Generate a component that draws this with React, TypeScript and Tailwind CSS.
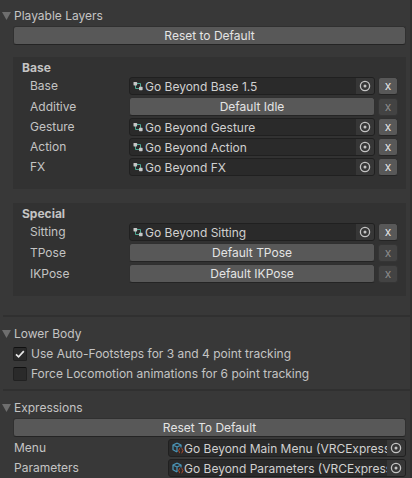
import { useState, type ReactNode } from "react";

function PickerIcon() {
  return (
    <svg viewBox="0 0 12 12" className="size-3" aria-hidden="true">
      <circle cx="6" cy="6" r="4.6" fill="none" stroke="#c4c4c4" strokeWidth="1.3" />
      <circle cx="6" cy="6" r="1.5" fill="#c4c4c4" />
    </svg>
  );
}

function ControllerIcon() {
  return (
    <svg viewBox="0 0 10 10" className="mr-0.5 size-2.5 shrink-0" aria-hidden="true">
      <path d="M4 2.500H7.500V6M2.500 4V7.500H6" fill="none" stroke="#4da893" strokeWidth="1" />
      <rect x="0.5" y="1" width="3.6" height="3.4" rx="0.6" fill="#c8c8c8" />
      <rect x="6" y="5.8" width="3.6" height="3.4" rx="0.6" fill="#c8c8c8" />
    </svg>
  );
}

function AssetIcon() {
  return (
    <svg viewBox="0 0 12 12" className="size-3 shrink-0" aria-hidden="true">
      <path
        d="M5 1.200 9 3V5.500M5 1.200 1 3V7.800L5 10M1 3 5 5 9 3M5 5V10"
        fill="none"
        stroke="#4a93b5"
        strokeWidth="1.3"
        strokeLinejoin="round"
      />
      <path
        d="M7.900 6.200C7 6.200 7.400 8.300 6.500 8.600 7.400 8.900 7 11 7.900 11M9.600 6.200C10.500 6.200 10.100 8.300 11 8.600 10.100 8.900 10.500 11 9.600 11"
        fill="none"
        stroke="#c4512d"
        strokeWidth="1"
      />
    </svg>
  );
}

function WideButton({ children, id }: { children: ReactNode; id?: string }) {
  return (
    <button
      id={id}
      type="button"
      className="h-[19px] w-full min-w-0 flex-1 rounded-[3px] border border-[#303030] border-b-[#242424] bg-[#585858] pt-px text-center leading-4 text-[#e4e4e4]"
    >
      {children}
    </button>
  );
}

function ObjectField({ id, value, icon }: { id: string; value: string; icon: ReactNode }) {
  return (
    <div className="flex h-[18px] min-w-0 flex-1 items-center rounded-[3px] border border-[#202020] bg-[#2a2a2a] pl-[3px]">
      {icon}
      <input
        id={id}
        type="text"
        readOnly
        value={value}
        className="h-4 min-w-0 flex-1 bg-transparent p-0 pt-px leading-4 text-[#d0d0d0] outline-none"
      />
      <button
        type="button"
        aria-label="Select object"
        className="flex h-4 w-[18px] shrink-0 items-center justify-center rounded-r-[2px] bg-[#373737]"
      >
        <PickerIcon />
      </button>
    </div>
  );
}

type Layer = { name: string; asset?: string; fallback?: string };

function LayerRow({ name, asset, fallback }: Layer) {
  const id = `layer-${name}`;
  return (
    <div className={`flex items-center pr-2 pl-[17px] ${asset ? "h-5" : "h-[21px]"}`}>
      <label htmlFor={id} className="w-[99px] shrink-0">
        {name}
      </label>
      {asset ? (
        <ObjectField id={id} value={asset} icon={<ControllerIcon />} />
      ) : (
        <WideButton id={id}>{fallback}</WideButton>
      )}
      <button
        type="button"
        disabled={!asset}
        aria-label={`Clear ${name}`}
        className="ml-[3px] h-[18px] w-5 shrink-0 rounded-[3px] border border-[#303030] border-b-[#242424] bg-[#585858] text-center leading-4 text-[#e4e4e4] disabled:border-[#353535] disabled:bg-[#434343] disabled:text-[#8c8c8c]"
      >
        x
      </button>
    </div>
  );
}

function LayerPanel({ title, layers }: { title: string; layers: Layer[] }) {
  return (
    <section className="mr-1 ml-[13px] bg-[#323232] pt-[3px] pb-3">
      <h3 className="h-4 pl-[9px] leading-4 font-bold">{title}</h3>
      {layers.map((layer) => (
        <LayerRow key={layer.name} {...layer} />
      ))}
    </section>
  );
}

function Foldout({ title, children }: { title: string; children: ReactNode }) {
  const [open, setOpen] = useState(true);
  return (
    <section>
      <h2>
        <button
          type="button"
          aria-expanded={open}
          onClick={() => setOpen(!open)}
          className="flex h-5 w-full items-center gap-[3px] pl-0.5 text-left"
        >
          <svg
            viewBox="0 0 9 8"
            className={`h-2 w-[9px] ${open ? "" : "-rotate-90"}`}
            aria-hidden="true"
          >
            <path d="M0 0H9L4.500 8Z" fill="#6e6e6e" />
          </svg>
          {title}
        </button>
      </h2>
      {open && children}
    </section>
  );
}

function Toggle({ label, initial }: { label: string; initial: boolean }) {
  const [on, setOn] = useState(initial);
  return (
    <label className="flex h-5 items-center gap-1 pl-[13px]">
      <span className="grid size-3.5 shrink-0">
        <input
          type="checkbox"
          checked={on}
          onChange={(e) => setOn(e.target.checked)}
          className="col-start-1 row-start-1 size-3.5 appearance-none rounded-[2px] border border-[#212121] border-t-[#101010] bg-[#2a2a2a]"
        />
        {on && (
          <svg
            viewBox="0 0 14 14"
            className="pointer-events-none col-start-1 row-start-1 size-3.5"
            aria-hidden="true"
          >
            <path d="M3 7.300 5.600 9.800 10.800 4.200" fill="none" stroke="#e8e8e8" strokeWidth="1.700" />
          </svg>
        )}
      </span>
      {label}
    </label>
  );
}

function ExpressionRow({ name, value }: { name: string; value: string }) {
  const id = `expression-${name}`;
  return (
    <div className="flex h-5 items-center pr-1 pl-3.5">
      <label htmlFor={id} className="w-[154px] shrink-0">
        {name}
      </label>
      <ObjectField id={id} value={value} icon={<AssetIcon />} />
    </div>
  );
}

const baseLayers: Layer[] = [
  { name: "Base", asset: "Go Beyond Base 1.5" },
  { name: "Additive", fallback: "Default Idle" },
  { name: "Gesture", asset: "Go Beyond Gesture" },
  { name: "Action", asset: "Go Beyond Action" },
  { name: "FX", asset: "Go Beyond FX" },
];

const specialLayers: Layer[] = [
  { name: "Sitting", asset: "Go Beyond Sitting" },
  { name: "TPose", fallback: "Default TPose" },
  { name: "IKPose", fallback: "Default IKPose" },
];

export default function App() {
  return (
    <main className="min-h-screen border-r-2 border-[#303030] bg-[#383838] pt-1.5 font-['Inter',sans-serif] text-[12px] leading-4 text-[#c4c4c4]">
      <Foldout title="Playable Layers">
        <div className="mb-3 flex pr-1 pl-[13px]">
          <WideButton>Reset to Default</WideButton>
        </div>
        <div className="flex flex-col gap-3.5">
          <LayerPanel title="Base" layers={baseLayers} />
          <LayerPanel title="Special" layers={specialLayers} />
        </div>
      </Foldout>
      <hr className="mt-[19px] mb-[7px] ml-[3px] border-t-2 border-[#303030]" />
      <Foldout title="Lower Body">
        <Toggle label="Use Auto-Footsteps for 3 and 4 point tracking" initial={true} />
        <Toggle label="Force Locomotion animations for 6 point tracking" initial={false} />
      </Foldout>
      <hr className="mt-[5px] mb-[7px] ml-[3px] border-t-2 border-[#303030]" />
      <Foldout title="Expressions">
        <div className="mb-px flex pr-1 pl-[13px]">
          <WideButton>Reset To Default</WideButton>
        </div>
        <ExpressionRow name="Menu" value="Go Beyond Main Menu (VRCExpressionsMenu)" />
        <ExpressionRow name="Parameters" value="Go Beyond Parameters (VRCExpressionParameters)" />
      </Foldout>
    </main>
  );
}
